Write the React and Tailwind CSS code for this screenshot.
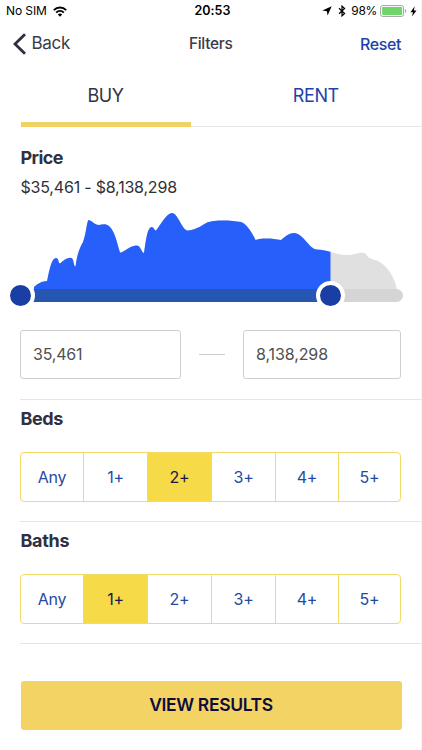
import React, { useState } from 'react';

const OPTIONS = ['Any', '1+', '2+', '3+', '4+', '5+'];

const CURVE =
  'M34 290 L34 287 C37 284 42 281 47 281 C49 273 51 258 56 258 C59 258 58 263 60 263.5 C64 259 72 255 73 260 C74 263 74 266 75.5 266.5 C77 254 80 247 83 242 C86 235 87 220 88.5 220 C91 220 95 225 99 225 C103 224 107 224 109 226 C115 231 117 243 120 252.5 C123 253 129 246 136 245.5 C141 245 141 252 144 253 C146 241 147 228 151.500 227 C154 227 154 230 156 230.500 C161 224 167 213 172 213 C178 213 182 230 187.500 230.500 C194 230 200 227 207 222.500 C214 219.500 232 220 241 222 C247 224 253 234 255.500 240 C263 237.500 273 238.500 281 240 C286 236 289 233 294 233 C303 233 309 249 317 249.500 C321 249.500 326 250.500 331 252 C339 255 348 256 355 254 C359 253 364 252 366 254 C368 258 371 259 377 260.500 C387 265 395 277 397 290 Z';

const StatusBar = () => (
  <div className="flex h-[22px] items-center justify-between pl-[6px] pr-[4px] text-black">
    <div className="flex w-[130px] items-center gap-[6px]">
      <span className="text-[12px] tracking-[-0.1px]">No SIM</span>
      <svg width="14" height="11" viewBox="0 0 14 11" fill="none" stroke="currentColor" strokeWidth="2">
        <path d="M0.8 4.100 C4.300 0.600 9.700 0.600 13.200 4.100" />
        <path d="M3.200 6.600 C5.400 4.500 8.600 4.500 10.800 6.600" />
        <path d="M7 10.700 L4.800 8.500 C6 7.300 8 7.300 9.200 8.500 Z" fill="currentColor" stroke="none" />
      </svg>
    </div>
    <span className="pl-[2px] text-[12.500px] font-semibold tracking-[0.05px]">20:53</span>
    <div className="flex w-[130px] items-center justify-end">
      <svg className="mr-[6px]" width="10" height="10" viewBox="0 0 10 10" fill="currentColor">
        <path d="M9.700 0.300 L5.600 9.600 L4.900 5.200 L0.400 4.500 Z" />
      </svg>
      <svg className="mr-[5px]" width="8" height="12" viewBox="0 0 8 12" fill="none" stroke="currentColor" strokeWidth="1.200">
        <path d="M1 3.300 L6.600 8.500 L4 10.900 V1.100 L6.600 3.500 L1 8.700" />
      </svg>
      <span className="mr-[3px] text-[12px] tracking-[-0.3px]">98%</span>
      <svg className="mr-[3px]" width="27" height="12" viewBox="0 0 27 12">
        <rect x="0.6" y="0.6" width="23" height="10.800" rx="2" fill="none" stroke="#a0a0a0" />
        <rect x="2.100" y="2.100" width="20" height="7.800" rx="0.6" fill="#6fd66a" />
        <path d="M25 4 C26.600 4.600 26.600 7.400 25 8 Z" fill="#a0a0a0" />
      </svg>
      <svg width="7" height="11" viewBox="0 0 7 11" fill="currentColor">
        <path d="M4.700 0.300 L0.500 6.200 H3 L2 10.600 L6.500 4.600 H3.900 Z" />
      </svg>
    </div>
  </div>
);

const NavBar = () => (
  <div className="grid h-[43px] grid-cols-3 items-center pl-[12.500px] pr-[20px]">
    <button className="flex items-center gap-[6px] text-[17px] tracking-[-0.3px] text-[#3b3b49]">
      <svg width="13" height="22" viewBox="0 0 13 22" fill="none" stroke="#2f2f3d" strokeWidth="2.800">
        <path d="M12 1.200 L2 11 L12 20.800" />
      </svg>
      Back
    </button>
    <h1 className="pl-[8px] text-center text-[15.500px] font-medium tracking-[-0.3px] text-[#3b3b49]">Filters</h1>
    <button className="text-right text-[16px] font-medium tracking-[-0.4px] text-[#1d43a8]">Reset</button>
  </div>
);

const PriceSlider = () => (
  <div className="relative h-[110px]">
    <svg className="block" width="422" height="110" viewBox="0 200 422 110">
      <defs>
        <clipPath id="selected">
          <rect x="0" y="200" width="330.500" height="110" />
        </clipPath>
      </defs>
      <path d={CURVE} fill="#e0e0e0" />
      <path d={CURVE} fill="#265ffa" clipPath="url(#selected)" />
    </svg>
    {/* track */}
    <div className="absolute left-[21px] top-[89px] h-[12.500px] w-[381.500px] rounded-full bg-[#d5d5d5]" />
    <div className="absolute left-[21px] top-[89px] h-[12.500px] w-[310px] bg-[#2456b2]" />
    {/* handles */}
    <div className="absolute left-[6px] top-[81px] size-[29px] rounded-full border-4 border-white bg-[#193fa5]" />
    <div className="absolute left-[316px] top-[81px] size-[29px] rounded-full border-4 border-white bg-[#193fa5]" />
  </div>
);

const OptionGroup = ({ value, onChange }) => (
  <div className="mr-[20px] grid h-[50px] grid-cols-[63px_64px_64px_64px_63px_1fr] overflow-hidden rounded-[4px] border border-[#f4da68]">
    {OPTIONS.map(option => (
      <button
        key={option}
        onClick={() => onChange(option)}
        className={`border-r border-[#f4da68] text-[16px] tracking-[-0.2px] last:border-r-0 ${
          option === value ? 'bg-[#f6da47] text-[#17174a]' : 'text-[#2449a5]'
        }`}
      >
        {option}
      </button>
    ))}
  </div>
);

const App = () => {
  const [min, setMin] = useState('35,461');
  const [max, setMax] = useState('8,138,298');
  const [beds, setBeds] = useState('2+');
  const [baths, setBaths] = useState('1+');

  return (
    <div className="h-[750px] w-[422px] overflow-hidden border-r border-[#f3f3f3] bg-white font-['Inter',sans-serif]">
      <StatusBar />
      <NavBar />

      {/* Tabs */}
      <div className="ml-[20.500px] flex h-[62px] border-b border-[#e7e7e8]">
        <button className="-mb-px w-[170.500px] border-b-[5px] border-[#f1d264] pt-[4px] text-[18px] tracking-[-0.5px] text-[#343441]">
          BUY
        </button>
        <button className="ml-[20px] w-[211px] text-[18px] tracking-[-0.4px] text-[#1d43a8]">
          RENT
        </button>
      </div>

      {/* Price */}
      <div className="flex h-[73px] flex-col pl-[20.500px] pt-[18px]">
        <h2 className="text-[18px] font-bold leading-[26px] tracking-[-0.6px] text-[#303041]">Price</h2>
        <p className="mt-[3px] text-[16px] leading-[26px] tracking-[-0.2px] text-[#303038]">
          ${min} - ${max}
        </p>
      </div>
      <PriceSlider />

      <div className="flex h-[89px] items-start pl-[20px] pt-[20px]">
        <input
          value={min}
          onChange={e => setMin(e.target.value)}
          className="h-[49px] w-[161px] rounded-[3px] border border-[#cfcfcf] px-[12px] pb-[2px] text-[16px] tracking-[-0.2px] text-[#505050] outline-none"
        />
        <div className="mx-[18px] mt-[24px] h-px w-[26px] bg-[#cfcfcf]" />
        <input
          value={max}
          onChange={e => setMax(e.target.value)}
          className="h-[49px] w-[158px] rounded-[3px] border border-[#cfcfcf] px-[12px] pb-[2px] text-[16px] tracking-[-0.1px] text-[#505050] outline-none"
        />
      </div>

      {/* Beds */}
      <section className="ml-[20px] h-[122px] border-t border-[#e5e5e6]">
        <h2 className="mb-[20px] mt-[6px] pl-[0.5px] text-[18px] font-bold leading-[26px] tracking-[-0.4px] text-[#303041]">Beds</h2>
        <OptionGroup value={beds} onChange={setBeds} />
      </section>

      {/* Baths */}
      <section className="ml-[20px] h-[123px] border-y border-[#e5e5e6]">
        <h2 className="mb-[20px] mt-[6px] pl-[0.5px] text-[18px] font-bold leading-[26px] tracking-[-0.3px] text-[#303041]">Baths</h2>
        <OptionGroup value={baths} onChange={setBaths} />
      </section>

      <button className="ml-[20.500px] mt-[37px] h-[49px] w-[381px] rounded-[3px] bg-[#f4d365] text-[17.500px] font-semibold tracking-[-0.35px] text-[#0d0d3d]">
        VIEW RESULTS
      </button>
    </div>
  );
};

export default App;
